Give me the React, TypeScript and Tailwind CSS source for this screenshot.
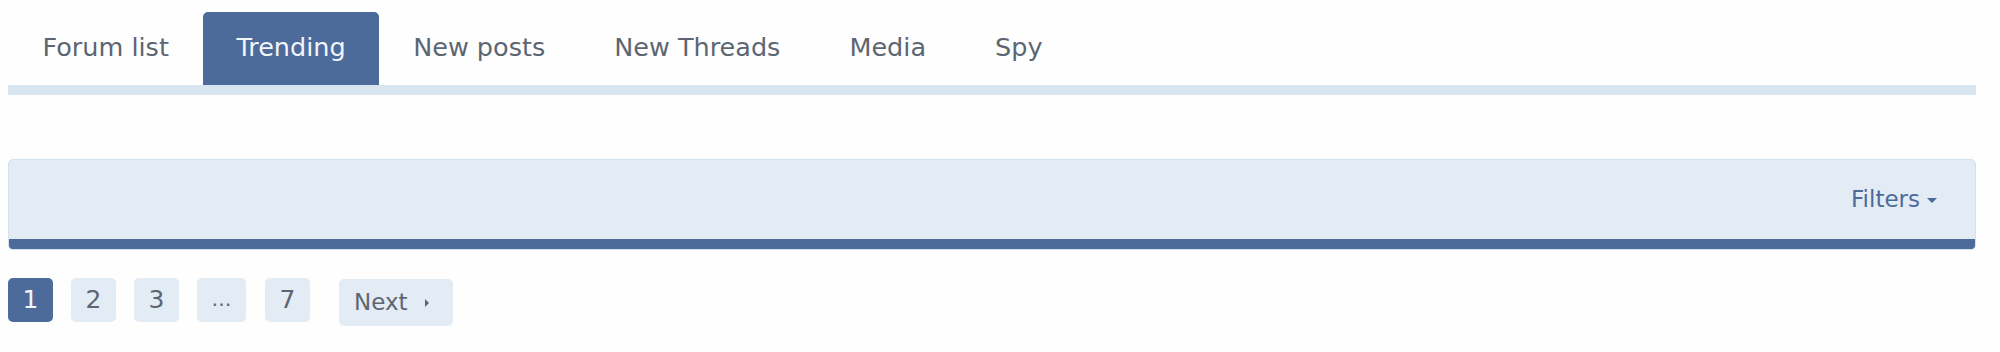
import React from "react";

const tabs = ["Forum list", "Trending", "New posts", "New Threads", "Media", "Spy"];

export default function App() {
  return (
    <div
      className="w-[2000px] h-[352px] bg-[#fefefe] pl-[8px] pr-[24px]"
      style={{ fontFamily: '"DejaVu Sans", Verdana, sans-serif' }}
    >
      <div className="flex pt-[12px]">
        {tabs.map((t) => (
          <div
            key={t}
            className={
              t === "Trending"
                ? "h-[73px] px-[33px] pb-[3px] flex items-center text-[25.5px] bg-[#4c6a9a] text-[#f2f5f9] rounded-t-[5px]"
                : "h-[73px] px-[34.5px] pb-[3px] flex items-center text-[25.5px] text-[#5c6672]"
            }
          >
            {t}
          </div>
        ))}
      </div>
      <div className="h-[10px] bg-[#d8e4f0]" />

      <div className="mt-[64px] border border-[#d6e1ee] rounded-[5px] overflow-hidden bg-[#e3ebf5]">
        <div className="h-[79px] flex items-center justify-end pr-[38px]">
          <span className="text-[23px] text-[#4c6a9a]">Filters</span>
          <span className="ml-[7px] mt-[2px] w-0 h-0 border-l-[5px] border-r-[5px] border-t-[5px] border-l-transparent border-r-transparent border-t-[#4c6a9a]" />
        </div>
        <div className="h-[10px] bg-[#4c6a9a]" />
      </div>

      <div className="mt-[28px] flex items-start">
        <div className="w-[45px] h-[44px] rounded-[5px] bg-[#4c6a9a] text-[#f2f5f9] text-[25px] flex items-center justify-center">
          1
        </div>
        <div className="ml-[18px] w-[45px] h-[44px] rounded-[5px] bg-[#e3ebf5] text-[#5c6672] text-[25px] flex items-center justify-center">
          2
        </div>
        <div className="ml-[18px] w-[45px] h-[44px] rounded-[5px] bg-[#e3ebf5] text-[#5c6672] text-[25px] flex items-center justify-center">
          3
        </div>
        <div className="ml-[18px] w-[49px] h-[44px] rounded-[5px] bg-[#e3ebf5] text-[#5c6672] text-[20px] flex items-end justify-center pb-[8px]">
          …
        </div>
        <div className="ml-[19px] w-[45px] h-[44px] rounded-[5px] bg-[#e3ebf5] text-[#5c6672] text-[25px] flex items-center justify-center">
          7
        </div>
        <div className="ml-[29px] w-[114px] h-[47px] mt-[1px] rounded-[5px] bg-[#e3ebf5] text-[#5c6672] text-[23px] flex items-center pl-[15px]">
          <span>Next</span>
          <span className="ml-[17px] w-0 h-0 border-t-[4px] border-b-[4px] border-l-[4px] border-t-transparent border-b-transparent border-l-[#5c6672]" />
        </div>
      </div>
    </div>
  );
}
